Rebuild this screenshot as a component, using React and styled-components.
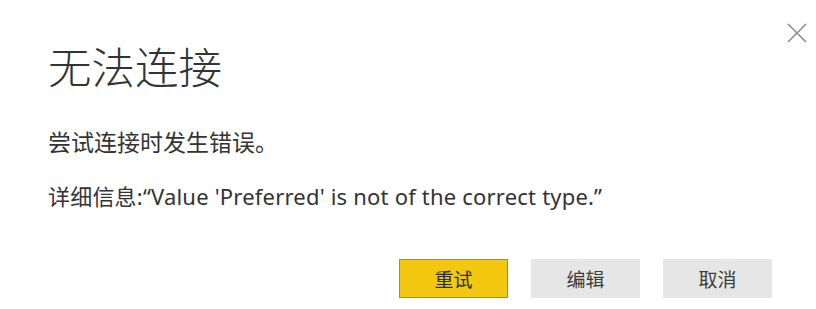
import React from 'react';
import styled, { createGlobalStyle } from 'styled-components';

const GlobalStyle = createGlobalStyle`
    html, body {
        margin: 0;
        padding: 0;
        background: #ffffff;
    }
    body {
        font-family: "Noto Sans", "Noto Sans CJK SC", sans-serif;
    }
`;

//Outer dialog frame
const ScDialog = styled.div`
    position: relative;
    box-sizing: border-box;
    width: 816px;
    height: 309px;
    padding: 37px 44px 0 48px;
    display: flex;
    flex-direction: column;
    background: #ffffff;
    color: #333333;
`;

const ScTitle = styled.h1`
    margin: 0;
    font-family: "Noto Sans CJK SC", sans-serif;
    font-size: 43.5px;
    font-weight: 300;
    line-height: 58px;
    color: #333333;
`;

const ScClose = styled.button`
    position: absolute;
    top: 22px;
    right: 8px;
    width: 22px;
    height: 22px;
    padding: 0;
    border: none;
    background: transparent;
    cursor: pointer;
    display: flex;
    align-items: center;
    justify-content: center;
`;

const ScMessage = styled.p`
    margin: ${props => props.$top}px 0 0 0;
    font-size: ${props => props.$size}px;
    letter-spacing: ${props => props.$spacing || 0}px;
    line-height: 30px;
    color: #333333;
`;

//Button row at the bottom right
const ScActions = styled.div`
    margin-top: 48px;
    display: flex;
    justify-content: flex-end;
    gap: 23px;
`;

const ScButton = styled.button`
    box-sizing: border-box;
    width: 109px;
    height: 39px;
    padding: 0;
    font-family: "Noto Sans CJK SC", sans-serif;
    font-size: 19px;
    color: ${props => props.$primary ? '#2b2b2b' : '#3c3c3c'};
    background: ${props => props.$primary ? '#f2c811' : '#e6e6e6'};
    border: 1px solid ${props => props.$primary ? '#8a8a8a' : '#e6e6e6'};
    cursor: pointer;
`;

function CloseIcon() {
    return (
        <svg width="20" height="20" viewBox="0 0 20 20">
            <path d="M1 1 L19 19 M19 1 L1 19" stroke="#8c8c8c" strokeWidth="1.6" fill="none" />
        </svg>
    );
}

export default function App() {
    return (
        <>
            <GlobalStyle />
            <ScDialog>
                <ScClose type="button" aria-label="关闭"><CloseIcon /></ScClose>
                <ScTitle>无法连接</ScTitle>
                <ScMessage $top={32} $size={23}>尝试连接时发生错误。</ScMessage>
                <ScMessage $top={24} $size={22} $spacing={0.2}>详细信息:“Value 'Preferred' is not of the correct type.”</ScMessage>
                <ScActions>
                    <ScButton type="button" $primary>重试</ScButton>
                    <ScButton type="button">编辑</ScButton>
                    <ScButton type="button">取消</ScButton>
                </ScActions>
            </ScDialog>
        </>
    );
}
